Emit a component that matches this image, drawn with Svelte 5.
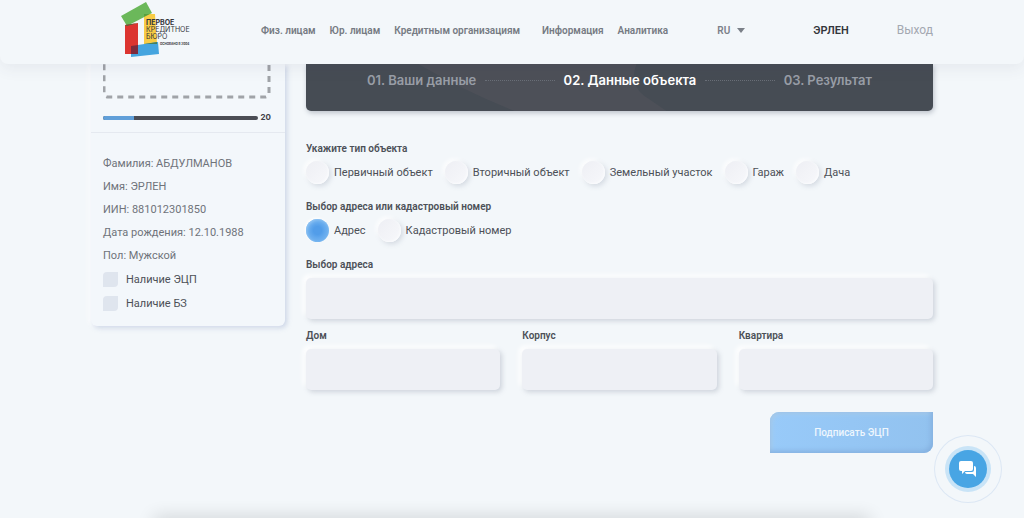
<script>
  const navMain = ['Физ. лицам', 'Юр. лицам', 'Кредитным организациям'];
  const navInfo = ['Информация', 'Аналитика'];

  const steps = ['01. Ваши данные', '02. Данные объекта', '03. Результат'];
  let currentStep = 1;

  const person = [
    { label: 'Фамилия', value: 'АБДУЛМАНОВ' },
    { label: 'Имя', value: 'ЭРЛЕН' },
    { label: 'ИИН', value: '881012301850' },
    { label: 'Дата рождения', value: '12.10.1988' },
    { label: 'Пол', value: 'Мужской' }
  ];
  let flags = [
    { label: 'Наличие ЭЦП', checked: false },
    { label: 'Наличие БЗ', checked: false }
  ];
  let progress = 20;

  const objectTypes = ['Первичный объект', 'Вторичный объект', 'Земельный участок', 'Гараж', 'Дача'];
  const searchModes = ['Адрес', 'Кадастровый номер'];
  let objectType = '';
  let searchMode = 'Адрес';

  let address = '';
  let house = '';
  let block = '';
  let flat = '';
</script>

<div class="page">
  <header class="header">
    <div class="container header-row">
      <a href="#home" class="logo" aria-label="Первое кредитное бюро">
        <svg width="70" height="58" viewBox="0 0 70 58">
          <path d="M1 15L26 1L32 12L7 25Z" fill="#6bb85a" />
          <path d="M24 13L35 13L37 43L24 43Z" fill="#f8cc45" />
          <path d="M11 45L38 41L39 53L11 56Z" fill="#45a5df" />
          <path d="M5 24L18 22L18 53L5 53Z" fill="#dc3530" />
          <path d="M5 24L18 22L7 25Z" fill="#50653a" />
          <path d="M11 45L18 44L18 53L11 53Z" fill="#7c2b3d" />
          <path d="M24 43L37 41L37 43Z" fill="#48805c" />
          <path d="M24 16L30 13L24 13Z" fill="#58a13f" />
          <text x="26" y="24" font-size="7" font-weight="700">ПЕРВОЕ</text>
          <text x="26" y="31" font-size="7">КРЕДИТНОЕ</text>
          <text x="26" y="38" font-size="7">БЮРО</text>
          <text x="40" y="44" font-size="3" font-weight="700">ОСНОВАНО В 2004</text>
        </svg>
      </a>
      <nav class="nav">
        <div class="nav-group">
          {#each navMain as item}
            <a href="#nav">{item}</a>
          {/each}
        </div>
        <div class="nav-group">
          {#each navInfo as item}
            <a href="#nav">{item}</a>
          {/each}
        </div>
      </nav>
      <div class="account">
        <button type="button" class="lang">
          RU
          <svg width="8" height="5" viewBox="0 0 8 5"><path d="M0 0H8L4 5Z" fill="#7b8088" /></svg>
        </button>
        <a href="#profile" class="user">ЭРЛЕН</a>
        <a href="#logout" class="logout">Выход</a>
      </div>
    </div>
  </header>

  <div class="container content">
    <aside class="card">
      <div class="card-top">
        <div class="photo">
          <svg width="100%" height="35">
            <rect x="1" y="-60" width="165" height="93" rx="4" fill="none" stroke="#a0a3a8" stroke-width="3" stroke-dasharray="6 5" />
          </svg>
        </div>
        <div class="progress">
          <div class="bar"><div class="bar-fill" style="width: {progress}%"></div></div>
          <span>{progress}</span>
        </div>
      </div>
      <div class="card-info">
        {#each person as row}
          <p>{row.label}: {row.value}</p>
        {/each}
        {#each flags as flag}
          <label class="flag">
            <input type="checkbox" bind:checked={flag.checked} />
            {flag.label}
          </label>
        {/each}
      </div>
    </aside>

    <main class="main">
      <div class="steps">
        <svg class="steps-bg" viewBox="0 0 626 47" preserveAspectRatio="none">
          <path d="M112 0Q160 28 208 47H360L338 32Q322 20 330 0Z" fill="#4d5058" />
        </svg>
        {#each steps as step, i}
          {#if i > 0}<i class="dots"></i>{/if}
          <span class="step" class:active={i === currentStep}>{step}</span>
        {/each}
      </div>

      <form on:submit|preventDefault>
        <fieldset>
          <legend>Укажите тип объекта</legend>
          <div class="radios">
            {#each objectTypes as type}
              <label class="radio">
                <input type="radio" name="type" value={type} bind:group={objectType} />
                {type}
              </label>
            {/each}
          </div>
        </fieldset>

        <fieldset>
          <legend>Выбор адреса или кадастровый номер</legend>
          <div class="radios">
            {#each searchModes as mode}
              <label class="radio">
                <input type="radio" name="mode" value={mode} bind:group={searchMode} />
                {mode}
              </label>
            {/each}
          </div>
        </fieldset>

        <label class="field">
          Выбор адреса
          <input type="text" bind:value={address} />
        </label>
        <div class="fields">
          <label class="field">
            Дом
            <input type="text" bind:value={house} />
          </label>
          <label class="field">
            Корпус
            <input type="text" bind:value={block} />
          </label>
          <label class="field">
            Квартира
            <input type="text" bind:value={flat} />
          </label>
        </div>

        <button type="submit" class="submit">Подписать ЭЦП</button>
      </form>
    </main>
  </div>

  <div class="bottom-shadow"></div>

  <button type="button" class="chat" aria-label="Чат">
    <svg width="18" height="17" viewBox="0 0 18 17" fill="#fff">
      <path d="M2 0H12Q14 0 14 2V8Q14 10 12 10H6L3 13V10H2Q0 10 0 8V2Q0 0 2 0Z" />
      <path d="M15 5Q17 5 17 7V16L14 13H8Q6 13 6 11H13Q15 11 15 9Z" />
    </svg>
  </button>
</div>

<style>
  :global(body) {
    margin: 0;
    background: #f3f7fa;
  }

  .page {
    min-height: 100vh;
    overflow: hidden;
    position: relative;
    box-sizing: border-box;
    font-family: Roboto, 'Liberation Sans', sans-serif;
    font-size: 11px;
    line-height: 15px;
    color: #4c5057;
    background: #f3f7fa;
  }

  a {
    color: inherit;
    text-decoration: none;
  }

  button,
  input {
    font-family: inherit;
  }

  .container {
    max-width: 842px;
    margin: 0 auto;
  }

  /* Header */
  .header {
    position: relative;
    z-index: 2;
    background: #f3f7fa;
    border-radius: 0 0 8px 8px;
    box-shadow: 0 4px 16px rgba(60, 65, 90, 0.08);
  }

  .header-row {
    display: flex;
    align-items: center;
    height: 64px;
  }

  .logo {
    display: flex;
    margin-left: 29px;
    margin-bottom: 4px;
    font-family: Inter, sans-serif;
  }

  .logo text {
    fill: #34363a;
  }

  .nav {
    display: flex;
    gap: 22px;
    margin-left: 71px;
    margin-bottom: 4px;
    color: #767b83;
    font-size: 10px;
    font-weight: 600;
    white-space: nowrap;
  }

  .nav-group {
    display: flex;
    gap: 14px;
  }

  .account {
    display: flex;
    align-items: center;
    gap: 48px;
    margin-left: auto;
    margin-bottom: 4px;
  }

  .lang {
    display: flex;
    align-items: center;
    gap: 7px;
    margin-right: 20px;
    padding: 0;
    border: 0;
    background: none;
    color: #7b8088;
    font-size: 10px;
    font-weight: 600;
  }

  .user {
    color: #33363b;
    font-weight: 600;
  }

  .logout {
    color: #a4a8b1;
    font-size: 12px;
  }

  /* Layout */
  .content {
    display: flex;
    align-items: flex-start;
    gap: 21px;
  }

  .card {
    flex: 0 0 194px;
    border-radius: 0 0 6px 6px;
    background: #f3f7fb;
    box-shadow: 2px 2px 5px rgba(130, 150, 195, 0.35), -2px 0 5px #fff;
  }

  .card-top {
    padding: 0 14px 7px 12px;
    border-bottom: 1px solid #e5e9f0;
  }

  .photo svg {
    display: block;
  }

  .progress {
    display: flex;
    align-items: center;
    gap: 3px;
    margin-top: 11px;
    font-family: Inter, sans-serif;
    font-size: 8px;
    font-weight: 700;
    color: #3f4248;
  }

  .bar {
    flex: 1;
    height: 4px;
    border-radius: 2px;
    background: #4b4d55;
    overflow: hidden;
  }

  .bar-fill {
    height: 100%;
    background: #609fd9;
  }

  .card-info {
    display: flex;
    flex-direction: column;
    gap: 8px;
    padding: 23px 12px 15px;
    color: #6f737a;
  }

  .card-info p {
    margin: 0;
  }

  .flag {
    display: flex;
    align-items: center;
    gap: 8px;
    min-height: 16px;
    color: #4c5057;
  }

  .flag input {
    appearance: none;
    width: 15px;
    height: 15px;
    margin: 0;
    border-radius: 4px 0 4px 0;
    background: #dfe5ee;
  }

  .flag input:checked {
    background: #62a5e9;
  }

  .main {
    flex: 1;
    min-width: 0;
  }

  /* Steps */
  .steps {
    position: relative;
    display: flex;
    align-items: center;
    gap: 9px;
    padding: 7px 61px 22px;
    border-radius: 0 0 5px 5px;
    background: #464c54;
    box-shadow: 1px 2px 5px rgba(60, 70, 90, 0.3);
    overflow: hidden;
    font-family: Inter, sans-serif;
  }

  .steps-bg {
    position: absolute;
    inset: 0;
    width: 100%;
    height: 100%;
  }

  .step {
    position: relative;
    color: #989da6;
    font-size: 13px;
    font-weight: 600;
    line-height: 18px;
    white-space: nowrap;
  }

  .step.active {
    color: #fff;
  }

  .dots {
    position: relative;
    flex: 1;
    border-top: 1px dotted #6a6f78;
  }

  /* Form */
  form {
    display: flex;
    flex-direction: column;
    padding-top: 30px;
  }

  fieldset {
    min-width: 0;
    margin: 0 0 15px;
    padding: 0;
    border: 0;
  }

  legend {
    padding: 0;
    font-size: 10px;
    font-weight: 600;
  }

  .radios {
    display: flex;
    flex-wrap: wrap;
    gap: 12px;
    padding-top: 5px;
  }

  .radio {
    display: flex;
    align-items: center;
    gap: 5px;
  }

  .radio input {
    appearance: none;
    width: 23px;
    height: 23px;
    margin: 0;
    border-radius: 50%;
    background: linear-gradient(135deg, #eeeff4, #f7f8fb);
    box-shadow: inset -1px -1px 2px #fafbfd, 2px 2px 5px rgba(120, 130, 155, 0.25), -2px -2px 4px #fff;
  }

  .radio input:checked {
    background: radial-gradient(circle, #529de9 25%, #62a8ed 45%, #73b3ef 70%);
    box-shadow: inset 1px 1px 3px #91c4f3, -1px -1px 3px #fff;
  }

  .field {
    display: block;
    font-size: 10px;
    font-weight: 600;
  }

  .field input {
    display: block;
    box-sizing: border-box;
    width: 100%;
    height: 41px;
    margin-top: 6px;
    padding: 0 12px;
    border: 0;
    border-radius: 5px;
    outline: 0;
    background: #eef0f5;
    box-shadow: 2px 2px 5px rgba(120, 130, 150, 0.3), -3px -3px 5px #fff;
    font-size: 11px;
  }

  .fields {
    display: grid;
    grid-template-columns: repeat(3, 1fr);
    gap: 22px;
    margin-top: 9px;
  }

  .submit {
    align-self: flex-end;
    width: 163px;
    height: 41px;
    margin-top: 22px;
    border: 0;
    border-radius: 9px 0 9px 0;
    background: linear-gradient(90deg, #98caf9, #92c2ef);
    box-shadow: inset -2px -2px 5px #84b0df, inset 2px 2px 4px #a9cbe9;
    color: #eef6fd;
    font-size: 10px;
    font-weight: 500;
  }

  .bottom-shadow {
    position: absolute;
    left: 15%;
    right: 15%;
    bottom: -10px;
    height: 10px;
    box-shadow: 0 0 18px rgba(0, 0, 0, 0.2);
  }

  /* Chat button floats over the page */
  .chat {
    position: fixed;
    right: 37px;
    bottom: 30px;
    display: flex;
    align-items: center;
    justify-content: center;
    width: 38px;
    height: 38px;
    padding: 0;
    border: 0;
    border-radius: 50%;
    background: #48a5e4;
    box-shadow: 0 0 0 4px #c9e4f7, 0 0 0 14px #f3f7fa, 0 0 0 15px #dce7f4;
  }
</style>
